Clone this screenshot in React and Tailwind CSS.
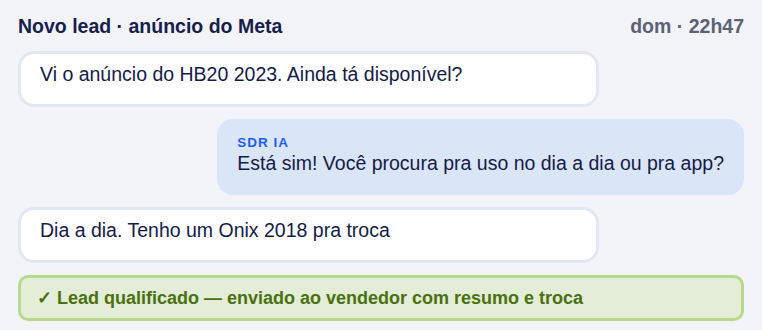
const Bolha = ({ children }) => (
  <div className="w-[80%] rounded-[16px] border-[3px] border-[#e2e7f1] bg-white px-[19px] pt-[7px] pb-4 text-[19.5px] leading-[27px] text-[#151b47]">
    {children}
  </div>
)

const App = () => {
  return (
    <div
      className="min-h-screen w-full bg-[#f3f4f9] px-[18px] pt-[14px]"
      style={{ fontFamily: '"Liberation Sans", Arial, sans-serif' }}
    >
      <div className="flex flex-col gap-3">
        <header className="flex items-center justify-between text-[19.5px] font-bold leading-[25px]">
          <span className="text-[#16204a]">Novo lead · anúncio do Meta</span>
          <span className="text-[#5b6274]">dom · 22h47</span>
        </header>

        <Bolha>Vi o anúncio do HB20 2023. Ainda tá disponível?</Bolha>

        <div className="self-end rounded-[16px] bg-[#dbe5f8] px-5 pt-4 pb-[18px]">
          <div className="text-[13.5px] font-bold leading-[15px] tracking-[1px] text-[#1c5cf0]">
            SDR IA
          </div>
          <div className="text-[19.5px] leading-[27px] text-[#151b47]">
            Está sim! Você procura pra uso no dia a dia ou pra app?
          </div>
        </div>

        <Bolha>Dia a dia. Tenho um Onix 2018 pra troca</Bolha>

        <div className="rounded-[10px] border-[3px] border-[#b8d98c] bg-[#e3edd8] px-4 py-[7px] text-[18px] font-bold leading-[26px] text-[#4b700f]">
          ✓ Lead qualificado — enviado ao vendedor com resumo e troca
        </div>
      </div>
    </div>
  )
}

export default App
